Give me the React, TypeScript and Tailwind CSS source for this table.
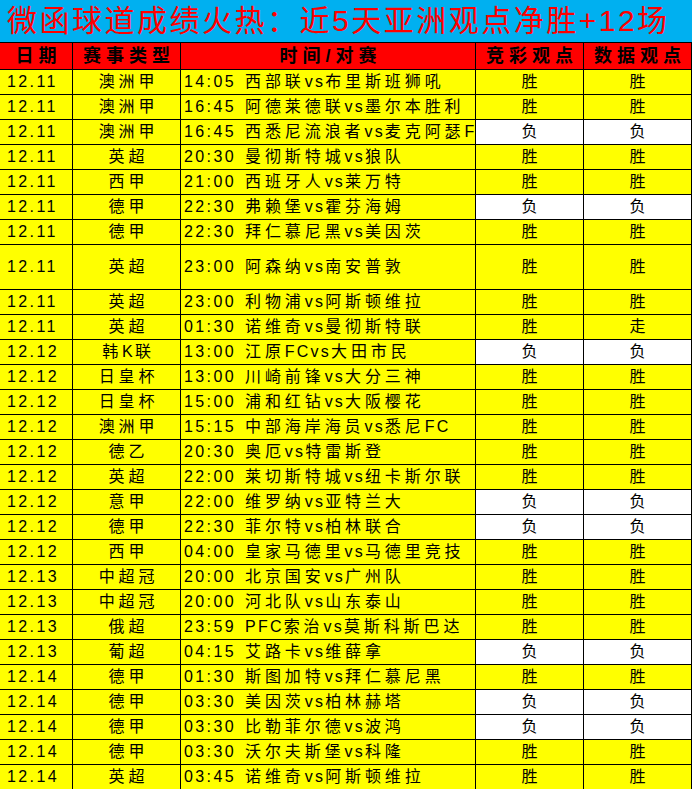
import React from "react";

type Row = {
  d: string;
  l: string;
  t: string;
  m: string;
  a: string;
  b: string;
  tall?: boolean;
};

const rows: Row[] = [
  { d: "12.11", l: "澳洲甲", t: "14:05", m: "西部联vs布里斯班狮吼", a: "胜", b: "胜" },
  { d: "12.11", l: "澳洲甲", t: "16:45", m: "阿德莱德联vs墨尔本胜利", a: "胜", b: "胜" },
  { d: "12.11", l: "澳洲甲", t: "16:45", m: "西悉尼流浪者vs麦克阿瑟FC", a: "负", b: "负" },
  { d: "12.11", l: "英超", t: "20:30", m: "曼彻斯特城vs狼队", a: "胜", b: "胜" },
  { d: "12.11", l: "西甲", t: "21:00", m: "西班牙人vs莱万特", a: "胜", b: "胜" },
  { d: "12.11", l: "德甲", t: "22:30", m: "弗赖堡vs霍芬海姆", a: "负", b: "负" },
  { d: "12.11", l: "德甲", t: "22:30", m: "拜仁慕尼黑vs美因茨", a: "胜", b: "胜" },
  { d: "12.11", l: "英超", t: "23:00", m: "阿森纳vs南安普敦", a: "胜", b: "胜", tall: true },
  { d: "12.11", l: "英超", t: "23:00", m: "利物浦vs阿斯顿维拉", a: "胜", b: "胜" },
  { d: "12.11", l: "英超", t: "01:30", m: "诺维奇vs曼彻斯特联", a: "胜", b: "走" },
  { d: "12.12", l: "韩K联", t: "13:00", m: "江原FCvs大田市民", a: "负", b: "负" },
  { d: "12.12", l: "日皇杯", t: "13:00", m: "川崎前锋vs大分三神", a: "胜", b: "胜" },
  { d: "12.12", l: "日皇杯", t: "15:00", m: "浦和红钻vs大阪樱花", a: "胜", b: "胜" },
  { d: "12.12", l: "澳洲甲", t: "15:15", m: "中部海岸海员vs悉尼FC", a: "胜", b: "胜" },
  { d: "12.12", l: "德乙", t: "20:30", m: "奥厄vs特雷斯登", a: "胜", b: "胜" },
  { d: "12.12", l: "英超", t: "22:00", m: "莱切斯特城vs纽卡斯尔联", a: "胜", b: "胜" },
  { d: "12.12", l: "意甲", t: "22:00", m: "维罗纳vs亚特兰大", a: "负", b: "负" },
  { d: "12.12", l: "德甲", t: "22:30", m: "菲尔特vs柏林联合", a: "负", b: "负" },
  { d: "12.12", l: "西甲", t: "04:00", m: "皇家马德里vs马德里竞技", a: "胜", b: "胜" },
  { d: "12.13", l: "中超冠", t: "20:00", m: "北京国安vs广州队", a: "胜", b: "胜" },
  { d: "12.13", l: "中超冠", t: "20:00", m: "河北队vs山东泰山", a: "胜", b: "胜" },
  { d: "12.13", l: "俄超", t: "23:59", m: "PFC索治vs莫斯科斯巴达", a: "胜", b: "胜" },
  { d: "12.13", l: "葡超", t: "04:15", m: "艾路卡vs维薛拿", a: "负", b: "负" },
  { d: "12.14", l: "德甲", t: "01:30", m: "斯图加特vs拜仁慕尼黑", a: "胜", b: "胜" },
  { d: "12.14", l: "德甲", t: "03:30", m: "美因茨vs柏林赫塔", a: "负", b: "负" },
  { d: "12.14", l: "德甲", t: "03:30", m: "比勒菲尔德vs波鸿", a: "负", b: "负" },
  { d: "12.14", l: "德甲", t: "03:30", m: "沃尔夫斯堡vs科隆", a: "胜", b: "胜" },
  { d: "12.14", l: "英超", t: "03:45", m: "诺维奇vs阿斯顿维拉", a: "胜", b: "胜" },
];

function Mixed({ text }: { text: string }) {
  const parts = text.match(/[\x00-\x7F]+|[^\x00-\x7F]+/g) || [];
  return (
    <>
      {parts.map((p, i) =>
        /^[\x00-\x7F]+$/.test(p) ? (
          <span key={i} className="tracking-[2.2px]">
            {p}
          </span>
        ) : (
          <span key={i} className="tracking-[3.9px]">
            {p}
          </span>
        )
      )}
    </>
  );
}

const font = { fontFamily: '"Liberation Sans", "Noto Sans CJK SC", sans-serif' };

export default function App() {
  return (
    <div className="w-[693px] bg-white text-black" style={font}>
      <div className="w-[692px]">
        <div className="h-[42px] bg-[#00B0F0] flex items-center pl-[7px] text-[30px] leading-none text-[#FF0000] tracking-[2.5px] whitespace-nowrap overflow-hidden">
          微函球道成绩火热：近5天亚洲观点净胜+12场
        </div>
        <div className="grid grid-cols-[73px_108px_295px_108px_108px] h-[28px] border-t border-b border-black bg-[#FF0000] text-[18px] font-bold leading-none tracking-[5px]">
          <div className="border-r border-black flex items-center justify-center pl-[5px]">日期</div>
          <div className="border-r border-black flex items-center justify-center pl-[5px]">赛事类型</div>
          <div className="border-r border-black flex items-center justify-center pl-[5px]">时间/对赛</div>
          <div className="border-r border-black flex items-center justify-center pl-[5px]">竞彩观点</div>
          <div className="border-r border-black flex items-center justify-center pl-[5px]">数据观点</div>
        </div>
        {rows.map((r, i) => {
          const loss = r.a === "负";
          return (
            <div
              key={i}
              className={
                "grid grid-cols-[73px_108px_295px_108px_108px] border-b border-black text-[16px] leading-none " +
                (r.tall ? "h-[45px]" : "h-[25px]")
              }
            >
              <div className="bg-[#FFFF00] border-r border-black flex items-center pl-[7px] tracking-[2.4px]">
                {r.d}
              </div>
              <div className="bg-[#FFFF00] border-r border-black flex items-center justify-center pl-[4px] whitespace-nowrap">
                <Mixed text={r.l} />
              </div>
              <div className="bg-[#FFFF00] border-r border-black flex items-center pl-[3px] whitespace-nowrap overflow-hidden">
                <span className="tracking-[2.4px]">{r.t}</span>
                <span className="w-[9px] shrink-0" />
                <Mixed text={r.m} />
              </div>
              <div
                className={
                  "border-r border-black flex items-center justify-center " +
                  (loss ? "bg-white" : "bg-[#FFFF00]")
                }
              >
                {r.a}
              </div>
              <div
                className={
                  "border-r border-black flex items-center justify-center " +
                  (r.b === "负" ? "bg-white" : "bg-[#FFFF00]")
                }
              >
                {r.b}
              </div>
            </div>
          );
        })}
      </div>
    </div>
  );
}
